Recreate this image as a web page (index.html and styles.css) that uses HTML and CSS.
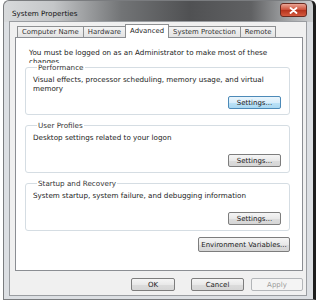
FILE: index.html
```html
<!DOCTYPE html>
<html lang="en">
<head>
    <meta charset="UTF-8">
    <title>System Properties</title>
    <link rel="stylesheet" href="styles.css">
</head>
<body>

    <div class="window">
        <!-- Title bar -->
        <div class="titlebar">
            <span class="title">System Properties</span>
            <button class="close" type="button">
                <svg width="9" height="7" viewBox="0 0 9 7"><path d="M1.5 1 L7.5 6 M7.5 1 L1.5 6" stroke="#fff" stroke-width="1.8" stroke-linecap="round"/></svg>
            </button>
        </div>

        <div class="client">
            <!-- Tabs -->
            <div class="tabs">
                <div class="tab">Computer Name</div>
                <div class="tab">Hardware</div>
                <div class="tab active">Advanced</div>
                <div class="tab">System Protection</div>
                <div class="tab">Remote</div>
            </div>

            <!-- Advanced page -->
            <div class="page">
                <p class="intro">You must be logged on as an Administrator to make most of these changes.</p>

                <fieldset class="group">
                    <legend>Performance</legend>
                    <p class="desc">Visual effects, processor scheduling, memory usage, and virtual memory</p>
                    <div class="actions"><button class="btn default" type="button">Settings...</button></div>
                </fieldset>

                <fieldset class="group">
                    <legend>User Profiles</legend>
                    <p class="desc">Desktop settings related to your logon</p>
                    <div class="actions"><button class="btn" type="button">Settings...</button></div>
                </fieldset>

                <fieldset class="group">
                    <legend>Startup and Recovery</legend>
                    <p class="desc">System startup, system failure, and debugging information</p>
                    <div class="actions"><button class="btn" type="button">Settings...</button></div>
                </fieldset>

                <div class="env">
                    <button class="btn wide" type="button">Environment Variables...</button>
                </div>
            </div>

            <!-- Dialog buttons -->
            <div class="footer">
                <button class="btn ok" type="button">OK</button>
                <button class="btn cancel" type="button">Cancel</button>
                <button class="btn apply" type="button" disabled>Apply</button>
            </div>
        </div>
    </div>

</body>
</html>
```

FILE: styles.css
```css
body {
    margin: 0;
    background: #fff;
    font-family: "DejaVu Sans", Verdana, sans-serif;
    font-size: 7.2px;
    color: #222;
}
.window {
    width: 313px;
    height: 300px;
    margin-left: 3px;
    box-sizing: border-box;
    display: flex;
    flex-direction: column;
    padding: 0 6px 3px 5px;
    border: 1px solid #7a7c7f;
    border-right: 3px solid #1e1e1e;
    border-radius: 6px 6px 0 0;
    background:
        linear-gradient(90deg, #d8dadc 0%, #c4c6c8 16%, #727476 38%, #505153 60%, #606163 80%, #a4a6a8 92%, #cdcfd1 100%) top / 100% 21px no-repeat,
        #dcdfe3;
}
.titlebar {
    height: 20px;
    display: flex;
    justify-content: space-between;
    align-items: flex-start;
}
.title {
    padding: 8px 0 0 3px;
    font-size: 7.2px;
    color: #111;
}
.close {
    width: 27px;
    height: 14px;
    margin-top: 2px;
    padding: 0;
    display: flex;
    align-items: center;
    justify-content: center;
    border: 1px solid #6a2a20;
    border-radius: 3px;
    background: linear-gradient(#eaa595, #cc4d36 50%, #b4321c 51%, #d55a3e);
}
.client {
    flex: 1;
    display: flex;
    flex-direction: column;
    padding: 4px 3px 4px 5px;
    border: 1px solid #9a9da1;
    background: #f0f0f0;
}
.tabs {
    display: flex;
    height: 11px;
    padding-left: 2px;
}
.tab {
    height: 11px;
    box-sizing: border-box;
    padding: 0 4px;
    line-height: 10px;
    border: 1px solid #8e9092;
    border-bottom: none;
    margin-right: -1px;
    background: linear-gradient(#f4f4f4, #e3e3e3);
    color: #333;
    font-size: 6.9px;
}
.tab.active {
    position: relative;
    z-index: 1;
    height: 14px;
    margin-top: -2px;
    padding: 1px 4px 0;
    background: #fff;
    color: #222;
}
.page {
    flex: 1;
    padding: 10px 12px 0 9px;
    border: 1px solid #8b8e93;
    background: #fff;
}
.intro {
    margin: 0;
    padding-left: 4px;
    height: 15px;
    overflow: hidden;
    line-height: 9px;
}
.group {
    margin: 0 0 6px;
    padding: 3px 8px 5px 7px;
    border: 1px solid #d5dde3;
    border-radius: 3px;
}
.group legend {
    margin-left: 4px;
    padding: 0 1px;
    line-height: 9px;
    color: #333;
}
.desc {
    margin: 0;
    height: 18px;
    line-height: 9px;
}
.actions {
    display: flex;
    justify-content: flex-end;
    margin-top: 3px;
}
.btn {
    height: 13px;
    width: 53px;
    padding: 0;
    box-sizing: border-box;
    font-family: inherit;
    font-size: 7px;
    color: #222;
    border: 1px solid #7d7d7d;
    border-radius: 2px;
    background: linear-gradient(#f5f5f5, #e9e9e9 50%, #dcdcdc 51%, #d6d6d6);
}
.btn.default {
    border-color: #4c8ab8;
    background: linear-gradient(#eaf5fc, #d9eefb 50%, #bde3f7 51%, #a9d8f2);
}
.env {
    display: flex;
    justify-content: flex-end;
    margin-top: 3px;
}
.btn.wide {
    width: 92px;
    height: 15px;
}
.footer {
    display: flex;
    justify-content: flex-end;
    margin-top: 7px;
}
.btn.ok {
    width: 44px;
}
.btn.cancel {
    margin-left: 16px;
}
.btn.apply {
    width: 52px;
    margin-left: 7px;
    color: #9a9a9a;
    border-color: #b3b6b9;
    background: #f4f4f4;
}
```
